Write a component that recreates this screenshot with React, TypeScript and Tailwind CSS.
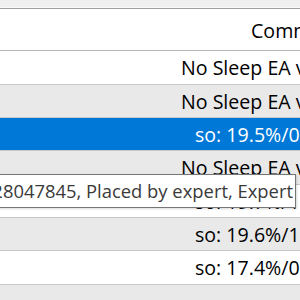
import React from "react";

type Row = { text: string; pl: string; bg: string; h: string; selected?: boolean };

const rows: Row[] = [
  { text: "No Sleep EA v1.0", pl: "pl-[181px]", bg: "bg-white", h: "h-[34px]" },
  { text: "No Sleep EA v1.0", pl: "pl-[181px]", bg: "bg-[#e9e9e9]", h: "h-[33px]" },
  { text: "so: 19.5%/0.6%/1.8%", pl: "pl-[195px]", bg: "bg-[#0078d7]", h: "h-[33px]", selected: true },
  { text: "No Sleep EA v1.0", pl: "pl-[181px]", bg: "bg-[#e9e9e9]", h: "h-[34px]" },
  { text: "so: 19.7%/1.2%/2.0%", pl: "pl-[195px]", bg: "bg-white", h: "h-[33px]" },
  { text: "so: 19.6%/1.4%/2.2%", pl: "pl-[195px]", bg: "bg-[#e9e9e9]", h: "h-[33px]" },
  { text: "so: 17.4%/0.9%/1.5%", pl: "pl-[195px]", bg: "bg-white", h: "h-[34px]" },
  { text: "", pl: "pl-[195px]", bg: "bg-[#e9e9e9]", h: "h-[33px]" },
];

export default function App() {
  return (
    <div
      className="relative w-[300px] h-[300px] overflow-hidden bg-white text-[19.6px] text-black"
      style={{ fontFamily: '"Open Sans", "Noto Sans", sans-serif' }}
    >
      <div className="h-[8px] bg-[#f0f0f0] border-b border-[#fafafa]" />
      <div className="h-[1px] bg-[#a0a0a0]" />
      <div className="h-[42px] bg-white border-b border-[#b4b4b4] flex items-center pt-[3px] whitespace-nowrap overflow-hidden pl-[251px]">
        Comment
      </div>
      {rows.map((r, i) => (
        <div
          key={i}
          className={`${r.h} ${r.bg} ${r.pl} border-b border-[#c8c8c8] flex items-center pt-[1px] whitespace-nowrap overflow-hidden ${r.selected ? "text-white" : "text-black"}`}
        >
          {r.text}
        </div>
      ))}
      <div className="absolute top-[174px] left-[-400px] right-[4px] h-[34px] bg-white border border-[#767676] flex items-center justify-end pr-[2px] whitespace-nowrap text-[18.4px] text-[#3a3a3a] shadow-[1px_1px_2px_rgba(0,0,0,0.15)]">
        Ticket 128047845, Placed by expert, Expert
      </div>
    </div>
  );
}
